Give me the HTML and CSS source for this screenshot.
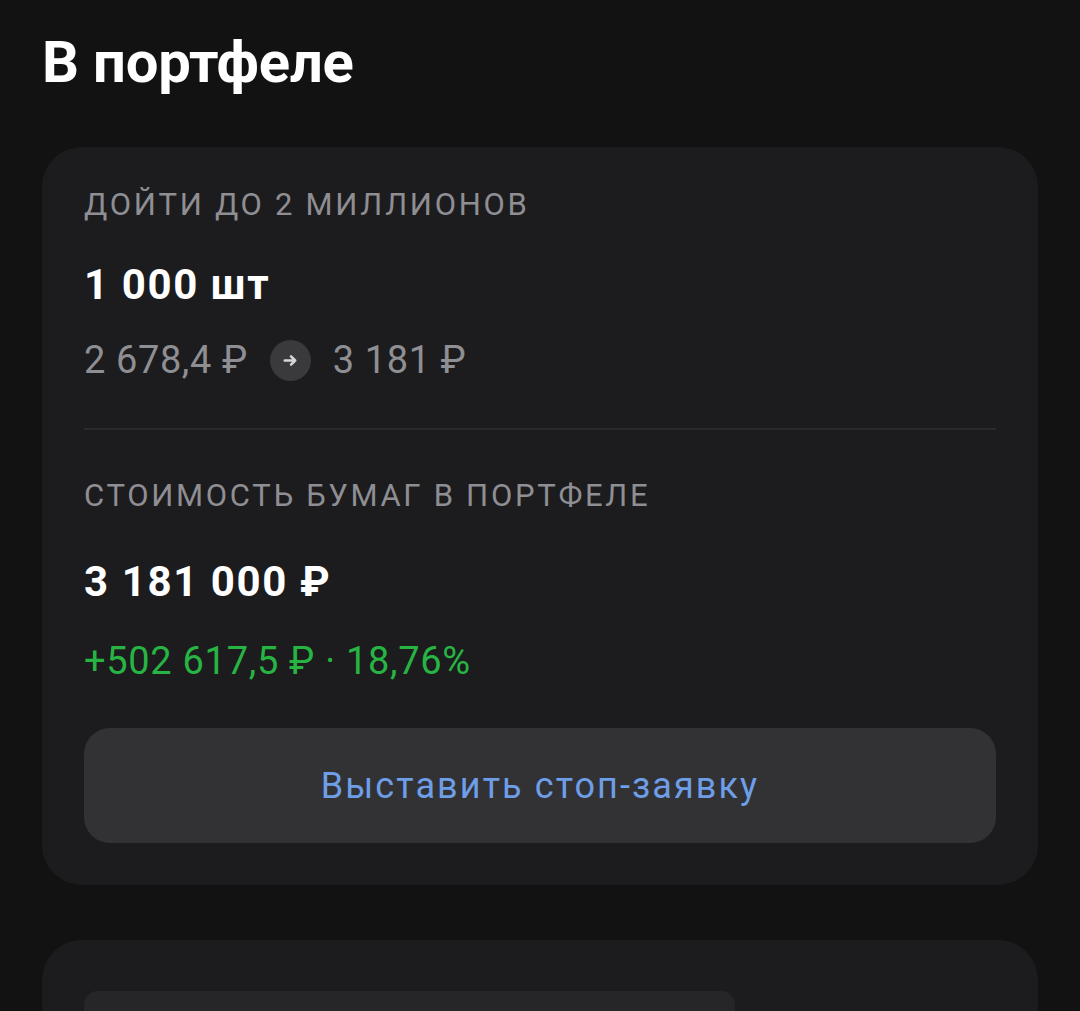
FILE: index.html
```html
<!DOCTYPE html>
<html lang="ru">
<head>
<meta charset="utf-8">
<title>В портфеле</title>
<link rel="stylesheet" href="styles.css">
</head>
<body>
<main class="page">
  <h1 class="title">В портфеле</h1>
  <section class="card">
    <div class="label">ДОЙТИ ДО 2 МИЛЛИОНОВ</div>
    <div class="value">1 000 шт</div>
    <div class="prices">
      <span>2 678,4 ₽</span>
      <span class="arrow">
        <svg viewBox="0 0 20 20" width="21" height="21"><path d="M4.5 10h10M10.5 6 14.5 10l-4 4" fill="none" stroke="#d6d6da" stroke-width="2.4" stroke-linecap="round" stroke-linejoin="round"/></svg>
      </span>
      <span>3 181 ₽</span>
    </div>
    <div class="divider"></div>
    <div class="label label2">СТОИМОСТЬ БУМАГ В ПОРТФЕЛЕ</div>
    <div class="value value2">3 181 000 ₽</div>
    <div class="gain">+502 617,5 ₽ · 18,76%</div>
    <button class="btn">Выставить стоп-заявку</button>
  </section>
  <section class="card card2">
    <div class="placeholder"></div>
  </section>
</main>
</body>
</html>
```

FILE: styles.css
```css
* { box-sizing: border-box; }
html, body { margin: 0; padding: 0; }
body {
  background: #121212;
  font-family: Roboto, "Noto Sans", sans-serif;
  color: #fff;
  overflow: hidden;
  height: 1011px;
}
.page {
  padding: 0 42px;
  height: 1011px;
  overflow: hidden;
}
.title {
  margin: 0;
  padding-top: 28px;
  font-size: 58px;
  line-height: 68px;
  font-weight: 700;
  color: #fff;
  letter-spacing: -0.2px;
}
.card {
  margin-top: 51px;
  background: #1c1c1e;
  border-radius: 40px;
  padding: 40px 42px 42px;
  display: flex;
  flex-direction: column;
}
.label {
  font-size: 31px;
  line-height: 36px;
  color: #8e8e93;
  letter-spacing: 2.7px;
  white-space: nowrap;
}
.value {
  margin-top: 38px;
  font-size: 42px;
  line-height: 48px;
  font-weight: 700;
  color: #fff;
  letter-spacing: 1.6px;
}
.prices {
  margin-top: 27px;
  display: flex;
  align-items: center;
  gap: 22px;
  font-size: 38px;
  line-height: 48px;
  color: #8e8e93;
  font-weight: 400;
  letter-spacing: 0.6px;
}
.arrow {
  width: 41px;
  height: 41px;
  border-radius: 50%;
  background: #3a3a3c;
  display: flex;
  align-items: center;
  justify-content: center;
}
.divider {
  margin-top: 44px;
  height: 2px;
  background: #2a2a2c;
}
.label2 {
  margin-top: 48px;
}
.value2 {
  margin-top: 44px;
}
.gain {
  margin-top: 31px;
  font-size: 38px;
  line-height: 48px;
  color: #27b443;
  font-weight: 400;
  letter-spacing: 0.7px;
}
.btn {
  margin-top: 43px;
  height: 115px;
  border: none;
  border-radius: 26px;
  background: #323234;
  color: #6e9ee8;
  font-family: inherit;
  font-size: 36px;
  letter-spacing: 2.1px;
}
.card2 {
  margin-top: 55px;
  height: 200px;
  padding: 51px 42px 0;
}
.placeholder {
  width: 651px;
  height: 80px;
  background: #262628;
  border-radius: 14px;
}
```
